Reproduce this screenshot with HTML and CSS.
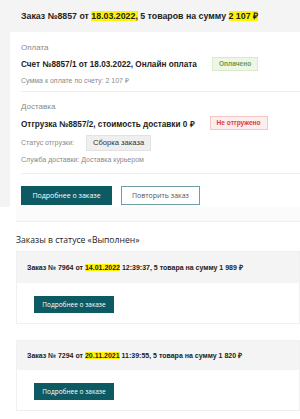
FILE: index.html
```html
<!DOCTYPE html>
<html lang="ru">
<head>
	<meta charset="UTF-8">
	<title>Заказы</title>

	<link rel="stylesheet" href="styles.css">
</head>
<body>

	<div class="top">
		<div class="top-head"><span>Заказ №8857 от <mark>18.03.2022,</mark> 5 товаров на сумму <mark>2 107 ₽</mark></span></div>
		<div class="top-body">
			<div class="sect sect-pay">
				<div class="label">Оплата</div>
				<div class="line">
					<b>Счет №8857/1 от 18.03.2022, Онлайн оплата</b>
					<span class="badge ok">Оплачено</span>
				</div>
				<div class="small">Сумма к оплате по счету: 2 107 ₽</div>
			</div>
			<div class="sect sect-ship">
				<div class="label">Доставка</div>
				<div class="line">
					<b>Отгрузка №8857/2, стоимость доставки 0 ₽</b>
					<span class="badge no">Не отгружено</span>
				</div>
				<div class="status">
					<span class="small">Статус отгрузки:</span>
					<span class="chip">Сборка заказа</span>
				</div>
				<div class="small">Служба доставки: Доставка курьером</div>
			</div>
			<div class="actions">
				<a href="#" class="btn">Подробнее о заказе</a>
				<a href="#" class="btn btn-line">Повторить заказ</a>
			</div>
		</div>
	</div>

	<div class="bottom">
		<div class="stub"></div>
		<h2>Заказы в статусе «Выполнен»</h2>

		<div class="card">
			<div class="card-head"><span>Заказ № 7964 от <mark>14.01.2022</mark> 12:39:37, 5 товара на сумму 1 989 ₽</span></div>
			<div class="card-body"><a href="#" class="btn btn-sm">Подробнее о заказе</a></div>
		</div>

		<div class="card">
			<div class="card-head"><span>Заказ № 7294 от <mark>20.11.2021</mark> 11:39:55, 5 товара на сумму 1 820 ₽</span></div>
			<div class="card-body"><a href="#" class="btn btn-sm">Подробнее о заказе</a></div>
		</div>
	</div>

</body>
</html>
```

FILE: styles.css
```css
*{
	margin: 0;
	padding: 0;
	box-sizing: border-box;
}

body{
	width: 300px;
	background: #fff;
	font-family: "Liberation Sans", Arial, sans-serif;
	color: #222;
	overflow: hidden;
}

a{
	text-decoration: none;
}

mark{
	background: #fff200;
	color: inherit;
}

/* верхний заказ */
.top{
	background: #f4f4f4;
}

.top-head{
	height: 32px;
	padding-left: 21px;
	display: flex;
	align-items: center;
	font-size: 8.8px;
	font-weight: bold;
}

.top-body{
	margin-left: 10px;
	padding-left: 11px;
	background: #fff;
}

.sect{
	border-bottom: 1px solid #efefef;
}

.sect-pay{
	padding: 10px 0 4px;
}

.sect-ship{
	padding: 9px 0 7px;
}

.label{
	font-size: 8px;
	color: #8a8a8a;
	line-height: 12px;
}

.line{
	display: flex;
	align-items: center;
	gap: 15px;
	margin-top: 3px;
	height: 14px;
	font-size: 8.2px;
}

.small{
	font-size: 7px;
	color: #8a8a8a;
	line-height: 12px;
	margin-top: 4px;
}

.sect-ship .small{
	margin-top: 3px;
}

.badge{
	display: inline-block;
	height: 14px;
	line-height: 12px;
	padding: 0 6px;
	font-size: 6.6px;
	font-weight: bold;
	border: 1px solid;
}

.badge.ok{
	background: #eef6e8;
	border-color: #d8e9cc;
	color: #6d9e45;
}

.badge.no{
	background: #fdeeee;
	border-color: #f6c6c6;
	color: #e03a3a;
}

.status{
	display: flex;
	align-items: center;
	gap: 12px;
	margin-top: 5px;
}

.sect-ship .status .small{
	margin-top: 0;
}

.chip{
	display: inline-block;
	height: 16px;
	line-height: 14px;
	padding: 0 6px;
	background: #efefef;
	border: 1px solid #e2e2e2;
	font-size: 7.6px;
	color: #333;
}

.actions{
	display: flex;
	gap: 9px;
	padding: 12px 0 2px;
}

.btn{
	display: inline-block;
	height: 19px;
	line-height: 19px;
	padding: 0 10px;
	background: #0d5a62;
	color: #fff;
	font-size: 7px;
	font-family: "Open Sans", sans-serif;
	text-align: center;
}

.actions .btn{
	width: 91px;
	padding: 0;
}

.actions .btn-line{
	width: 79px;
	background: #fff;
	color: #555;
	border: 1px solid #6e9ea3;
	line-height: 17px;
}

/* выполненные заказы */
.stub{
	margin-left: 16px;
	height: 15px;
	background: #fbfbfb;
	border-bottom: 1px solid #eee;
}

h2{
	margin: 11px 0 0 16px;
	font-family: "Open Sans", sans-serif;
	font-size: 8.6px;
	font-weight: normal;
	line-height: 14px;
	color: #222;
}

.card{
	margin: 4px 0 16px 16px;
	border: 1px solid #f0f0f0;
}

.card + .card{
	margin-top: 0;
}

.card-head{
	height: 31px;
	padding-left: 10px;
	display: flex;
	align-items: center;
	background: #f4f4f4;
	font-size: 7px;
	font-weight: bold;
}

.card + .card .card-head{
	height: 29px;
}

.card-body{
	padding: 10px 17px;
}

.btn-sm{
	width: 80px;
	height: 17px;
	line-height: 17px;
	padding: 0;
	font-size: 6.5px;
}
```
